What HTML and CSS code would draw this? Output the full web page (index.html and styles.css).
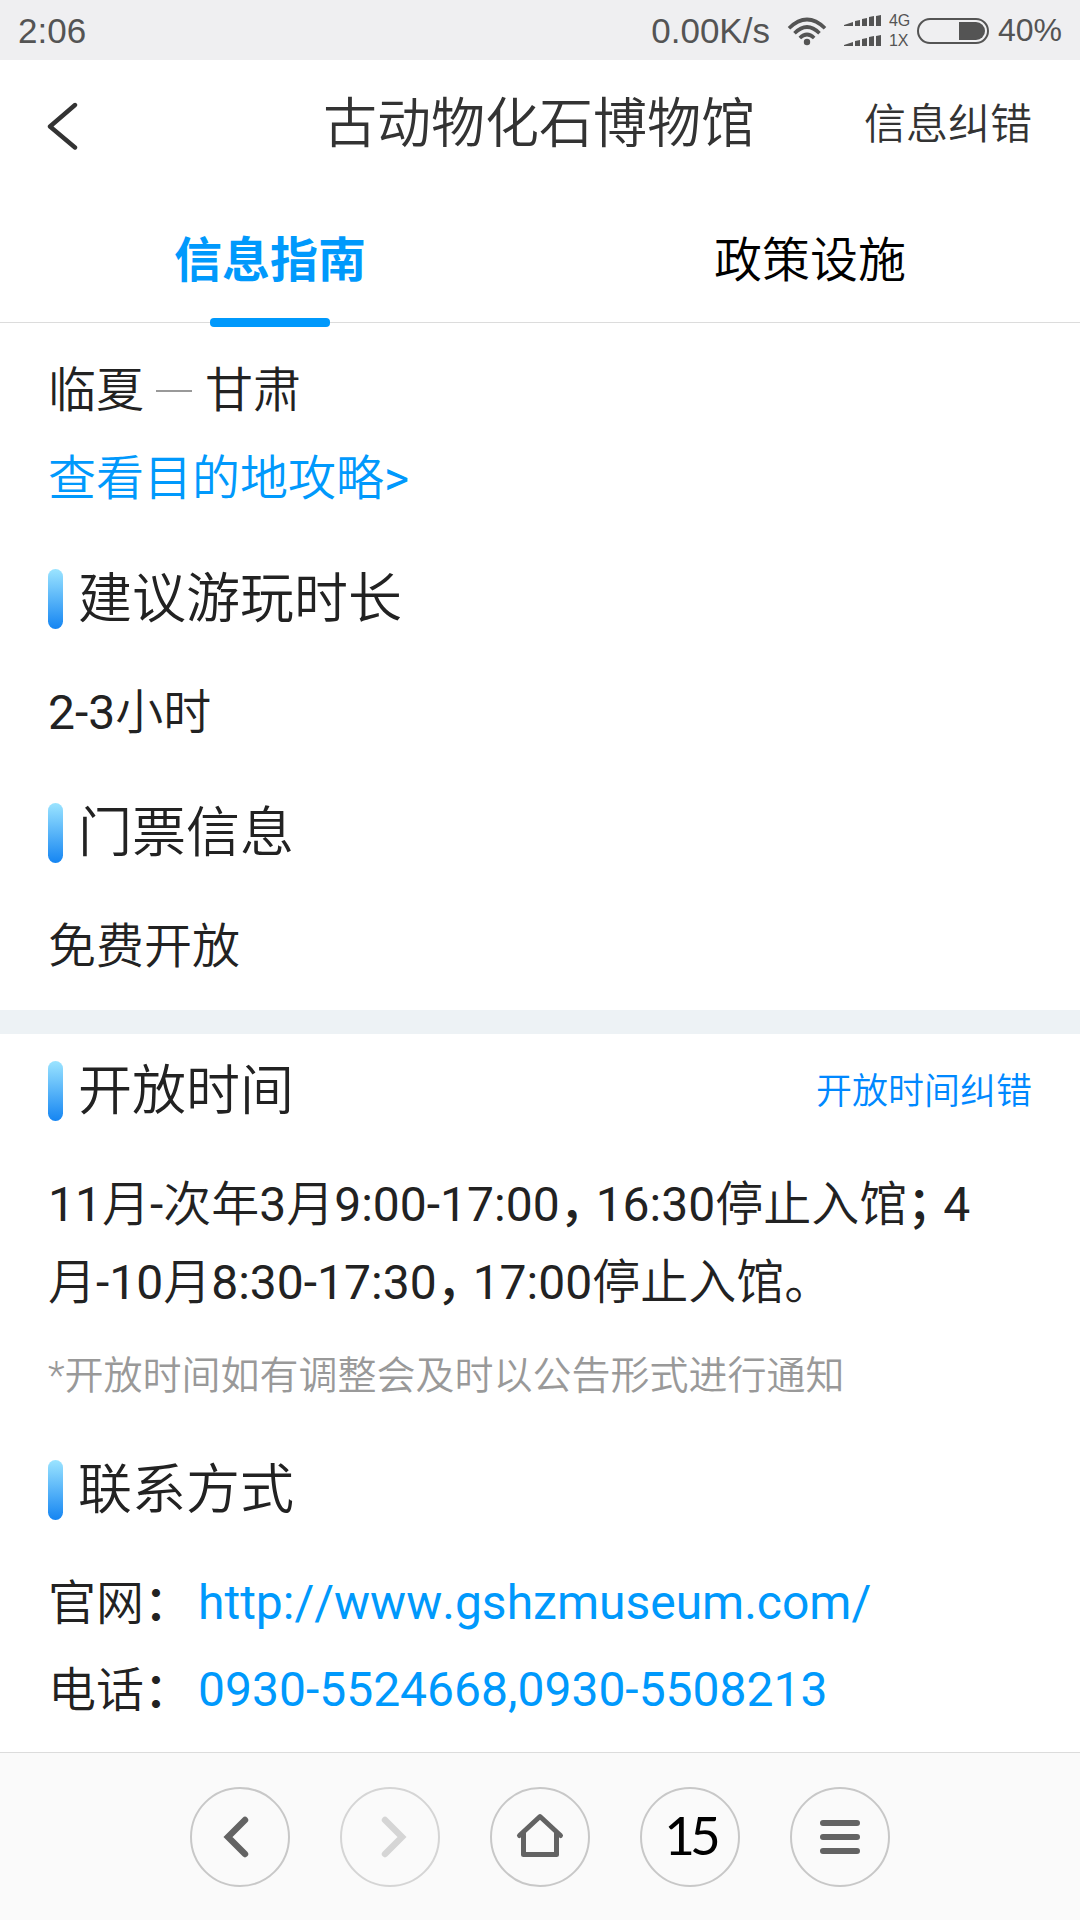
FILE: index.html
```html
<!DOCTYPE html>
<html lang="zh-CN">

<head>
    <meta charset="UTF-8">
    <meta name="viewport" content="width=device-width, initial-scale=1.0">
    <title>古动物化石博物馆</title>
    <link rel="stylesheet" href="styles.css">
</head>

<body>
    <div class="status-bar">
        <span class="time">2:06</span>
        <div class="status-right">
            <span class="speed">0.00K/s</span>
            <svg class="wifi" width="40" height="30" viewBox="0 0 40 30">
                <g fill="none" stroke="#545454" stroke-width="3.6">
                    <path d="M2 12.2Q20 -5.200 38 12.200" />
                    <path d="M7.500 17.200Q20 4.800 32.500 17.200" />
                    <path d="M12.800 22Q20 15 27.200 22" />
                </g>
                <circle cx="20" cy="26" r="3.200" fill="#545454" />
            </svg>
            <svg class="signal" width="38" height="32" viewBox="0 0 38 32" fill="#545454">
                <path d="M0 10L9 7v4H0zM11 6l5-1v6h-5zM18 4l5-1v8h-5zM25 2l5-1v10h-5zM32 1l5-1v11h-5z" />
                <path d="M0 30L9 27v4H0zM11 26l5-1v6h-5zM18 24l5-1v8h-5zM25 22l5-1v10h-5zM32 21l5-1v11h-5z" />
            </svg>
            <div class="network">
                <span>4G</span>
                <span>1X</span>
            </div>
            <div class="battery">
                <div class="battery-level"></div>
            </div>
            <span class="percent">40%</span>
        </div>
    </div>

    <header class="header">
        <svg class="back" width="32" height="50" viewBox="0 0 32 50">
            <path d="M29 4L4 25.500L29 46.500" fill="none" stroke="#333" stroke-width="4.400" stroke-linecap="round"
                stroke-linejoin="round" />
        </svg>
        <h1>古动物化石博物馆</h1>
        <a class="correct">信息纠错</a>
    </header>

    <nav class="tabs">
        <a class="tab active">信息指南</a>
        <a class="tab">政策设施</a>
    </nav>

    <main>
        <section class="block">
            <p class="place"><span>临夏</span><i class="dash"></i><span>甘肃</span></p>
            <a class="guide">查看目的地攻略<span class="arrow">&gt;</span></a>
            <h2 class="title">建议游玩时长</h2>
            <p class="text"><b>2-3</b>小时</p>
            <h2 class="title">门票信息</h2>
            <p class="text">免费开放</p>
        </section>

        <section class="block second">
            <div class="title-row">
                <h2 class="title">开放时间</h2>
                <a class="fix">开放时间纠错</a>
            </div>
            <p class="text hours"><b>11</b>月<b>-</b>次年<b>3</b>月<b>9:00-17:00</b><span
                    class="punct">，</span><b>16:30</b>停止入馆<span
                    class="punct">；</span><b>4</b><br>月<b>-10</b>月<b>8:30-17:30</b><span
                    class="punct">，</span><b>17:00</b>停止入馆。</p>
            <p class="note">*开放时间如有调整会及时以公告形式进行通知</p>
            <h2 class="title contact">联系方式</h2>
            <dl class="contacts">
                <dt>官网<span class="colon">：</span></dt>
                <dd>http://www.gshzmuseum.com/</dd>
                <dt>电话<span class="colon">：</span></dt>
                <dd>0930-5524668,0930-5508213</dd>
            </dl>
        </section>
    </main>

    <footer class="toolbar">
        <button class="circle">
            <svg viewBox="0 0 100 100">
                <path d="M55 33L38 50L55 67" stroke-width="6.400" />
            </svg>
        </button>
        <button class="circle disabled">
            <svg viewBox="0 0 100 100">
                <path d="M45 33L62 50L45 67" stroke-width="6.400" />
            </svg>
        </button>
        <button class="circle">
            <svg viewBox="0 0 100 100">
                <path d="M29.500 48.500L50 29.500L70.500 48.500M33.500 46V67.500H66.500V46" stroke-width="5"
                    stroke-linejoin="round" />
            </svg>
        </button>
        <button class="circle count"><span>15</span></button>
        <button class="circle">
            <svg viewBox="0 0 100 100">
                <path d="M33 36H67M33 50H67M33 64H67" stroke-width="6" />
            </svg>
        </button>
    </footer>
</body>

</html>
```
FILE: styles.css
```css
* {
    box-sizing: border-box;
    margin: 0;
    padding: 0;
}

body {
    width: 1080px;
    height: 1920px;
    display: flex;
    flex-direction: column;
    overflow: hidden;
    background-color: #fff;
    color: #222;
    font-family: Roboto, "Noto Sans CJK SC", sans-serif;
    font-size: 48px;
    font-weight: 350;
}

/* Barra de estado */
.status-bar {
    height: 60px;
    display: flex;
    align-items: center;
    justify-content: space-between;
    padding: 1px 18px 0;
    background-color: #efeff1;
    color: #545454;
    font-family: "Liberation Sans", Arial, sans-serif;
    font-size: 35px;
    font-weight: 400;
}

.status-right {
    display: flex;
    align-items: center;
}

.wifi {
    margin-left: 17px;
}

.signal {
    margin-left: 17px;
}

.network {
    display: flex;
    flex-direction: column;
    margin-left: 7px;
    width: 22px;
    font-size: 16px;
    line-height: 20px;
}

.battery {
    width: 72px;
    height: 26px;
    margin-left: 6px;
    padding: 2px;
    display: flex;
    justify-content: flex-end;
    border: 2px solid #545454;
    border-radius: 13px;
}

.battery-level {
    width: 26px;
    background-color: #545454;
    border-radius: 0 9px 9px 0;
}

.percent {
    margin-left: 9px;
    font-size: 32px;
}

/* Encabezado */
.header {
    height: 124px;
    display: grid;
    grid-template-columns: 1fr auto 1fr;
    align-items: center;
    padding: 0 48px 0 46px;
    color: #333;
}

.back {
    margin-top: 8px;
}

h1 {
    font-size: 54px;
    font-weight: 350;
    line-height: 80px;
    padding-top: 5px;
}

.correct {
    justify-self: end;
    padding-bottom: 4px;
    font-size: 42px;
}

.tabs {
    height: 139px;
    display: flex;
    border-bottom: 1px solid #dcdcdc;
}

.tab {
    position: relative;
    flex: 1;
    text-align: center;
    line-height: 153px;
    height: 138px;
    color: #000;
}

.active {
    color: #0099fc;
    font-weight: bold;
}

.active::after {
    content: "";
    position: absolute;
    left: 210px;
    bottom: -5px;
    width: 120px;
    height: 9px;
    border-radius: 4px;
    background-color: #0099fc;
}

/* Contenido */
main {
    flex: 1;
}

.block {
    height: 687px;
    padding: 30px 48px 0;
}

.place {
    display: flex;
    align-items: center;
    height: 76px;
    line-height: 76px;
}

.dash {
    width: 36px;
    height: 2px;
    margin: 0 13px 0 12px;
    background-color: #999;
}

.guide {
    display: block;
    margin-top: 12px;
    line-height: 76px;
    color: #0099fc;
}

.arrow {
    font-weight: 400;
}

.title {
    display: flex;
    height: 60px;
    line-height: 62px;
    font-size: 54px;
    font-weight: 350;
}

.title::before {
    content: "";
    width: 15px;
    height: 60px;
    margin-right: 15px;
    border-radius: 8px;
    background: linear-gradient(#9be4ff, #1585f2);
}

.guide + .title {
    margin-top: 52px;
}

.text {
    margin: 45px 0 51px;
    line-height: 78px;
}

.text b {
    font-weight: 400;
}

.second {
    height: 742px;
    border-top: 24px solid #edf2f5;
    padding-top: 27px;
}

.title-row {
    display: flex;
    align-items: center;
    justify-content: space-between;
}

.fix {
    padding-bottom: 6px;
    font-size: 36px;
    color: #0088ff;
}

.hours {
    margin-bottom: 0;
}

.punct {
    letter-spacing: -12px;
    font-weight: 500;
}

.note {
    margin-top: 24px;
    line-height: 60px;
    font-size: 39px;
    color: #999;
}

.contact {
    margin-top: 54px;
}

.contacts {
    display: grid;
    grid-template-columns: 150px 1fr;
    grid-auto-rows: 87px;
    margin-top: 40px;
    line-height: 87px;
}

dt {
    white-space: nowrap;
}

.colon {
    font-weight: 500;
}

dd {
    color: #0099fc;
    font-weight: 400;
    line-height: 85px;
    font-kerning: none;
}

/* Barra inferior */
.toolbar {
    height: 168px;
    display: flex;
    justify-content: center;
    align-items: center;
    gap: 50px;
    padding-top: 1px;
    border-top: 1px solid #dcdcdc;
    background-color: #fafafa;
}

.circle {
    width: 100px;
    height: 100px;
    border: 2px solid #c8c8c8;
    border-radius: 50%;
    background: none;
    color: #636363;
}

.circle svg {
    display: block;
    width: 100px;
    height: 100px;
    margin: -2px;
    fill: none;
    stroke: currentColor;
    stroke-linecap: round;
}

.disabled {
    color: #d5d5d5;
    border-color: #d5d5d5;
}

.count {
    padding-bottom: 6px;
    color: #000;
    font-family: Lato, sans-serif;
    font-size: 53px;
    letter-spacing: -5px;
}
```
